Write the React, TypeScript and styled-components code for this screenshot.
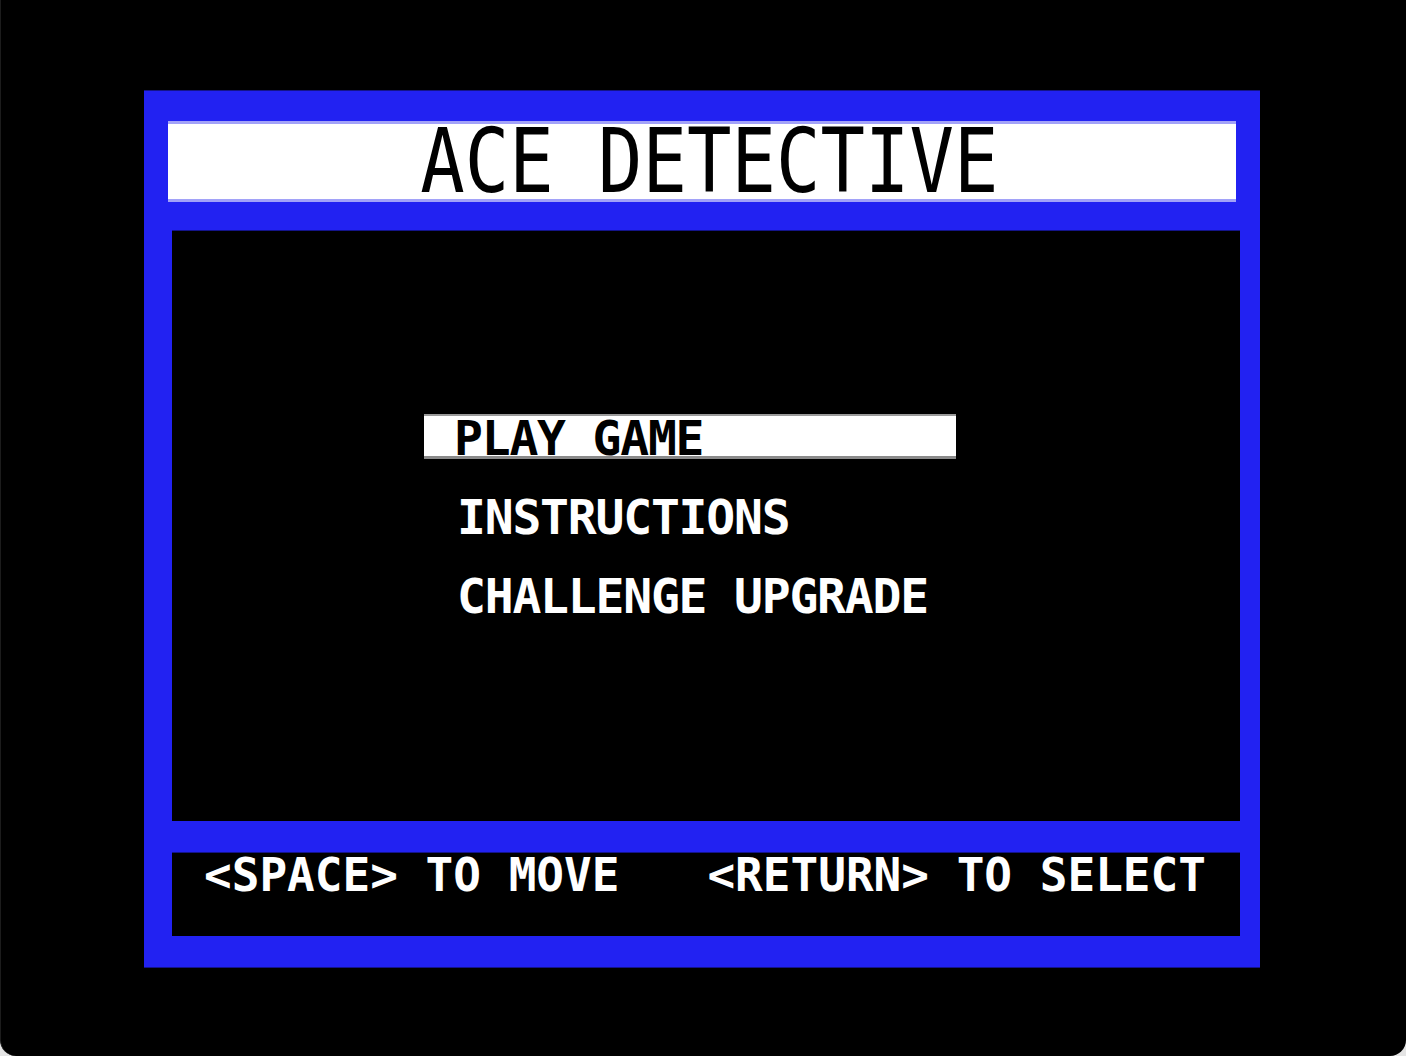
import styled, { createGlobalStyle } from "styled-components";

const GlobalStyle = createGlobalStyle`
  html, body {
    margin: 0;
    padding: 0;
    background: #e4e4e4;
  }
  * {
    box-sizing: border-box;
  }
`;

const Screen = styled.div`
  width: 1406px;
  height: 1056px;
  background: #000;
  border-left: 1px solid #1c1c1c;
  border-radius: 0 0 16px 16px;
  padding: 90px 0 0 143px;
  overflow: hidden;
`;

const Frame = styled.div`
  width: 1116px;
  height: 878px;
  background: #2222f2;
  border-top: 1px solid #14148a;
  border-bottom: 1px solid #14148a;
  display: flex;
  flex-direction: column;
  padding-top: 30px;
`;

const TitleBar = styled.div`
  margin: 0 24px;
  height: 81px;
  background: #fff;
  border-top: 3px solid #a2a2f8;
  border-bottom: 3px solid #a2a2f8;
  display: flex;
  align-items: center;
  justify-content: center;
`;

const Title = styled.h1`
  margin: 0 0 0 14px;
  font-family: "DejaVu Sans Mono", "Liberation Mono", monospace;
  font-weight: normal;
  font-size: 89px;
  line-height: 75px;
  height: 75px;
  color: #000;
  transform: scaleX(0.83);
  white-space: nowrap;
`;

const Panel = styled.div<{ $height: number; $top: number }>`
  margin: ${(p) => p.$top}px 20px 0 28px;
  height: ${(p) => p.$height}px;
  background: #000;
  border-top: 1px solid #14148a;
  font-family: "DejaVu Sans Mono", "Liberation Mono", monospace;
  font-weight: bold;
  font-size: 46px;
  color: #fff;
`;

const Menu = styled.ul`
  list-style: none;
  margin: 183px 0 0 252px;
  padding: 0;
  display: flex;
  flex-direction: column;
  gap: 34px;
`;

const Item = styled.li<{ $selected?: boolean }>`
  width: 532px;
  height: 45px;
  font-size: 48px;
  letter-spacing: -1.2px;
  line-height: 44px;
  padding-left: ${(p) => (p.$selected ? 30 : 33)}px;
  background: ${(p) => (p.$selected ? "#fff" : "transparent")};
  color: ${(p) => (p.$selected ? "#000" : "#fff")};
  border-top: 2px solid ${(p) => (p.$selected ? "#9a9a9a" : "transparent")};
  border-bottom: 3px solid ${(p) => (p.$selected ? "#8a8a8a" : "transparent")};
  white-space: pre;
`;

const Hints = styled.div`
  display: flex;
  gap: 88px;
  padding: 2px 0 0 32px;
  line-height: 40px;
  white-space: pre;
`;

const Hint = styled.span``;

export default function App() {
  return (
    <>
      <GlobalStyle />
      <Screen>
        <Frame>
          <TitleBar>
            <Title>ACE DETECTIVE</Title>
          </TitleBar>
          <Panel $top={28} $height={591}>
            <Menu>
              <Item $selected>PLAY GAME</Item>
              <Item>INSTRUCTIONS</Item>
              <Item>CHALLENGE UPGRADE</Item>
            </Menu>
          </Panel>
          <Panel $top={31} $height={84}>
            <Hints>
              <Hint>&lt;SPACE&gt; TO MOVE</Hint>
              <Hint>&lt;RETURN&gt; TO SELECT</Hint>
            </Hints>
          </Panel>
        </Frame>
      </Screen>
    </>
  );
}
